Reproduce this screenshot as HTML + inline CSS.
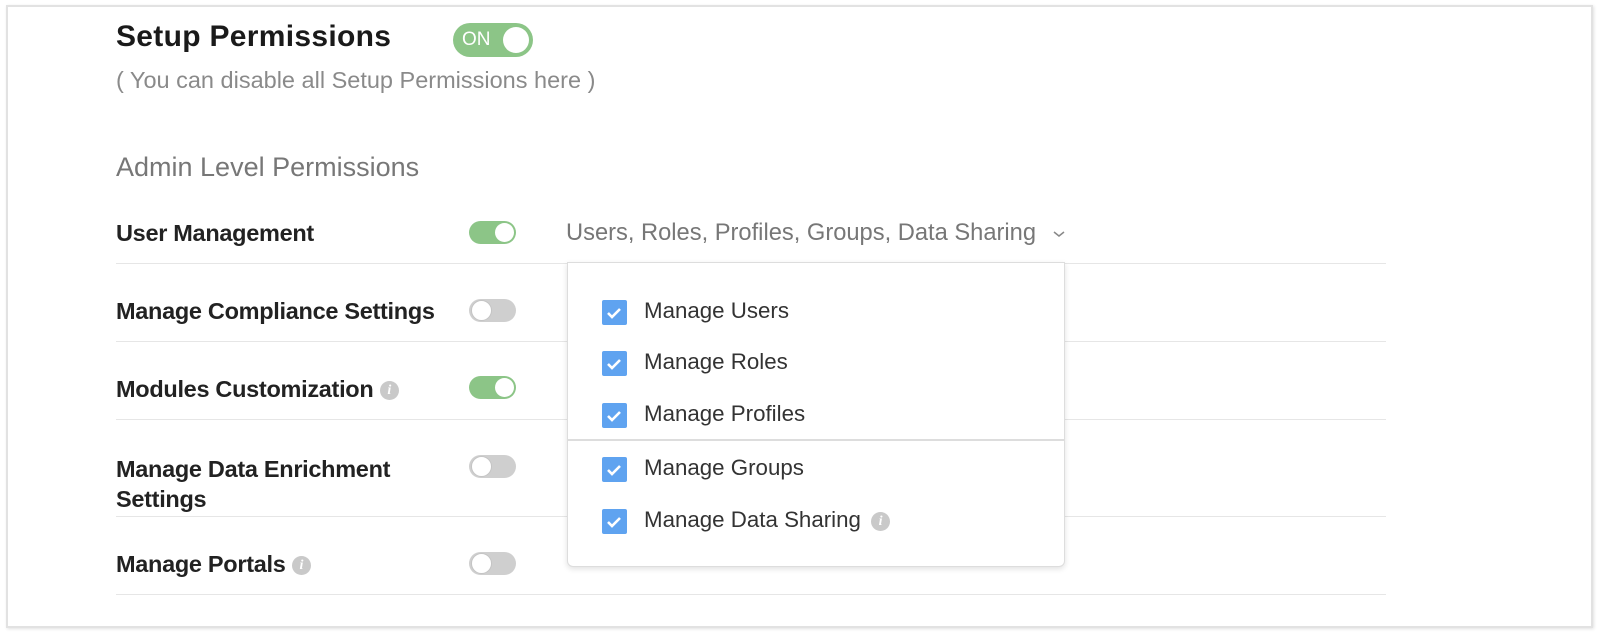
<!DOCTYPE html>
<html><head><style>
*{margin:0;padding:0;box-sizing:border-box}
body{width:1600px;height:636px;background:#fff;font-family:"Liberation Sans",sans-serif;position:relative;overflow:hidden}
.frame{position:absolute;left:6px;top:5px;width:1587px;height:623px;border:2px solid #e2e2e2;box-shadow:1px 1px 3px rgba(0,0,0,.12)}
.a{position:absolute;white-space:nowrap}
.t{font-size:30px;font-weight:bold;color:#1a1a1a;letter-spacing:0.3px}
.sub{font-size:23.5px;color:#8a8a8a}
.h{font-size:27px;color:#777}
.lbl{font-size:23.5px;font-weight:bold;color:#222;letter-spacing:-0.3px}
.line{position:absolute;left:116px;width:1270px;height:1px;background:#e6e6e6}
.tg{position:absolute;width:47px;height:23px;border-radius:12px}
.on{background:#8cc587}
.off{background:#cfcfcf}
.tg i{position:absolute;top:2px;width:19px;height:19px;border-radius:50%;background:#fff}
.on i{right:2px}.off i{left:2px;border:1px solid #c4c4c4;top:1px;width:21px;height:21px}
.info{display:inline-block;width:19px;height:19px;border-radius:50%;background:#c9c9c9;color:#fff;font-size:14px;font-style:italic;font-weight:bold;text-align:center;line-height:19px;font-family:"Liberation Serif",serif;vertical-align:middle}
.dd{position:absolute;left:567px;top:262px;width:498px;height:305px;background:#fff;border:1px solid #ddd;border-radius:0 0 6px 6px;box-shadow:0 2px 6px rgba(0,0,0,.12)}
.cb{position:absolute;left:34px;width:25px;height:25px;background:#5fa3f0;border-radius:2px}
.ci{position:absolute;left:76px;font-size:22.3px;color:#333;white-space:nowrap}
</style></head><body>
<div class="frame"></div>
<div class="a t" style="left:116px;top:20px">Setup Permissions</div>
<div class="tg on" style="left:453px;top:23px;width:80px;height:34px;border-radius:17px"><span style="position:absolute;left:9px;top:6px;color:#fff;font-size:19px">ON</span><i style="width:26px;height:26px;top:4px;right:4px"></i></div>
<div class="a sub" style="left:116px;top:67px">( You can disable all Setup Permissions here )</div>
<div class="a h" style="left:116px;top:152px">Admin Level Permissions</div>

<div class="a lbl" style="left:116px;top:220px">User Management</div>
<div class="tg on" style="left:469px;top:221px"><i></i></div>
<div class="a sub" style="left:566px;top:220px;font-size:23.7px;color:#777">Users, Roles, Profiles, Groups, Data Sharing</div>
<svg class="a" style="left:1052px;top:229px" width="14" height="10"><path d="M2 3l5 4 5-4" stroke="#888" stroke-width="1.5" fill="none"/></svg>
<div class="line" style="top:263px"></div>

<div class="a lbl" style="left:116px;top:298px">Manage Compliance Settings</div>
<div class="tg off" style="left:469px;top:299px"><i></i></div>
<div class="line" style="top:341px"></div>

<div class="a lbl" style="left:116px;top:376px">Modules Customization <span class="info">i</span></div>
<div class="tg on" style="left:469px;top:376px"><i></i></div>
<div class="line" style="top:419px"></div>

<div class="a lbl" style="left:116px;top:454px;line-height:30px">Manage Data Enrichment<br>Settings</div>
<div class="tg off" style="left:469px;top:455px"><i></i></div>
<div class="line" style="top:516px"></div>

<div class="a lbl" style="left:116px;top:551px">Manage Portals <span class="info">i</span></div>
<div class="tg off" style="left:469px;top:552px"><i></i></div>
<div class="line" style="top:594px"></div>

<div class="dd">
<div class="cb" style="top:37px"><svg width="25" height="25"><path d="M6 13l4 4 8-8" stroke="#fff" stroke-width="2.6" fill="none"/></svg></div>
<div class="ci" style="top:35px">Manage Users</div>
<div class="cb" style="top:88px"><svg width="25" height="25"><path d="M6 13l4 4 8-8" stroke="#fff" stroke-width="2.6" fill="none"/></svg></div>
<div class="ci" style="top:86px">Manage Roles</div>
<div class="cb" style="top:140px"><svg width="25" height="25"><path d="M6 13l4 4 8-8" stroke="#fff" stroke-width="2.6" fill="none"/></svg></div>
<div class="ci" style="top:138px">Manage Profiles</div>
<div style="position:absolute;left:0;right:0;top:176px;height:2px;background:#ddd"></div>
<div class="cb" style="top:194px"><svg width="25" height="25"><path d="M6 13l4 4 8-8" stroke="#fff" stroke-width="2.6" fill="none"/></svg></div>
<div class="ci" style="top:192px">Manage Groups</div>
<div class="cb" style="top:246px"><svg width="25" height="25"><path d="M6 13l4 4 8-8" stroke="#fff" stroke-width="2.6" fill="none"/></svg></div>
<div class="ci" style="top:244px">Manage Data Sharing <span class="info" style="margin-left:4px">i</span></div>
</div>
</body></html>
